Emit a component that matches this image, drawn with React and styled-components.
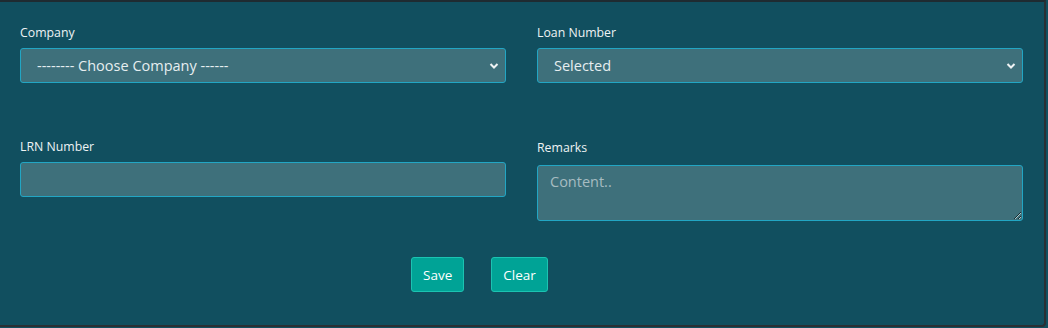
import styled, { createGlobalStyle } from 'styled-components';

const Global = createGlobalStyle`
    html, body {
        margin: 0;
        padding: 0;
        background: #114f5f;
    }
    body {
        font-family: 'Open Sans', 'Noto Sans', sans-serif;
    }
`;

const Panel = styled.div`
    box-sizing: border-box;
    width: 1046px;
    height: 327px;
    padding: 22px 21px 0 20px;
    background: #114f5f;
    border-top: 2px solid #1f2b31;
    border-right: 2px solid #2a3034;
    border-bottom: 2px solid #2a3034;
    border-bottom-right-radius: 4px;
`;

const Grid = styled.div`
    display: grid;
    grid-template-columns: 486px 486px;
    column-gap: 31px;
    row-gap: 55px;
`;

const Field = styled.div`
    display: flex;
    flex-direction: column;
    padding-top: ${(p) => (p.$shift ? '1px' : '0')};
`;

const Label = styled.label`
    height: 18px;
    margin-bottom: 6px;
    font-size: 12.3px;
    line-height: 18px;
    color: #eef3f4;
`;

const SelectWrap = styled.div`
    position: relative;
`;

const Select = styled.select`
    box-sizing: border-box;
    width: 100%;
    height: 35px;
    padding: 0 36px 0 16px;
    appearance: none;
    font-family: inherit;
    font-size: 14.5px;
    color: #e6eef0;
    background: #3e707b;
    border: 1px solid #22a6c4;
    border-radius: 3px;
    outline: none;
`;

const Chevron = styled.svg`
    position: absolute;
    right: 7px;
    top: 14px;
    width: 10px;
    height: 8px;
    pointer-events: none;
`;

const Input = styled.input`
    box-sizing: border-box;
    width: 100%;
    height: 35px;
    padding: 0 12px;
    font-family: inherit;
    font-size: 14.5px;
    color: #e6eef0;
    background: #3e707b;
    border: 1px solid #22a6c4;
    border-radius: 3px;
    outline: none;
`;

const TextArea = styled.textarea`
    box-sizing: border-box;
    display: block;
    width: 100%;
    height: 56px;
    margin-top: 2px;
    padding: 6px 12px;
    font-family: inherit;
    font-size: 14.5px;
    color: #e6eef0;
    background: #3e707b;
    border: 1px solid #22a6c4;
    border-radius: 3px;
    outline: none;
    &::placeholder {
        color: #a6bcc1;
    }
`;

const Actions = styled.div`
    display: flex;
    gap: 27px;
    margin-top: 36px;
    padding-left: 391px;
`;

const Button = styled.button`
    box-sizing: border-box;
    height: 35px;
    padding: 0 ${(p) => p.$pad || 12}px;
    font-family: inherit;
    font-size: 13.5px;
    color: #ffffff;
    background: #00a396;
    border: 1px solid #1cc3b2;
    border-radius: 3px;
`;

function Arrow() {
    return (
        <Chevron viewBox="0 0 10 8">
            <path d="M1.5 2 L5 5.5 L8.5 2" fill="none" stroke="#eef3f4" strokeWidth="2" />
        </Chevron>
    );
}

function App() {
    return (
        <Panel>
            <Global />
            <Grid>
                <Field>
                    <Label>Company</Label>
                    <SelectWrap>
                        <Select defaultValue="">
                            <option value="">-------- Choose Company ------</option>
                        </Select>
                        <Arrow />
                    </SelectWrap>
                </Field>
                <Field>
                    <Label>Loan Number</Label>
                    <SelectWrap>
                        <Select defaultValue="selected">
                            <option value="selected">Selected</option>
                        </Select>
                        <Arrow />
                    </SelectWrap>
                </Field>
                <Field>
                    <Label>LRN Number</Label>
                    <Input type="text" />
                </Field>
                <Field $shift>
                    <Label>Remarks</Label>
                    <TextArea placeholder="Content.." />
                </Field>
            </Grid>
            <Actions>
                <Button $pad={11}>Save</Button>
                <Button $pad={11}>Clear</Button>
            </Actions>
        </Panel>
    );
}

export default App;
